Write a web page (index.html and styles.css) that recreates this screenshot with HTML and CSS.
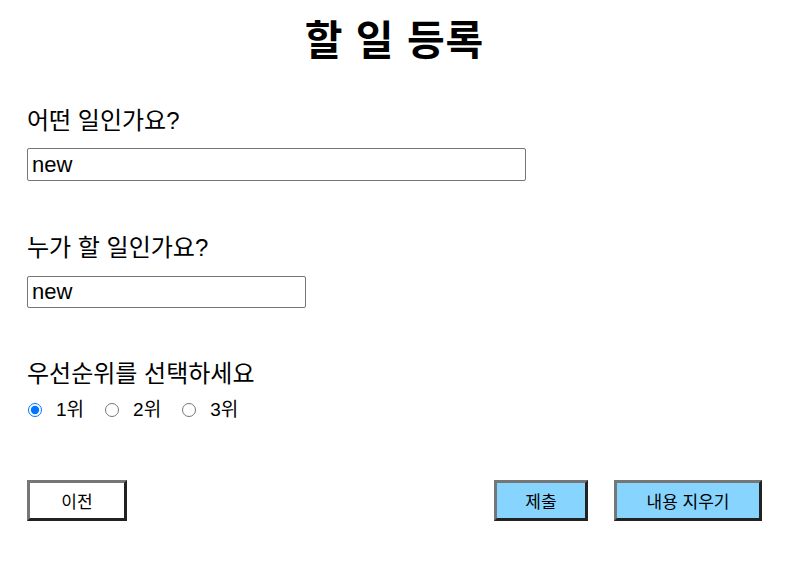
FILE: index.html
```html
<!DOCTYPE html>
<html lang="ko">
<head>
<meta charset="utf-8">
<link rel="stylesheet" href="styles.css">
</head>
<body>
<div class="page">
  <h1 class="title">할 일 등록</h1>
  <div class="field field-task">
    <label class="label">어떤 일인가요?</label>
    <input class="input input-wide" type="text" value="new">
  </div>
  <div class="field field-who">
    <label class="label">누가 할 일인가요?</label>
    <input class="input input-narrow" type="text" value="new">
  </div>
  <div class="field field-priority">
    <div class="label">우선순위를 선택하세요</div>
    <div class="radios">
      <label class="radio"><input type="radio" name="p" checked><span>1위</span></label>
      <label class="radio"><input type="radio" name="p"><span>2위</span></label>
      <label class="radio"><input type="radio" name="p"><span>3위</span></label>
    </div>
  </div>
  <div class="actions">
    <button class="btn btn-prev">이전</button>
    <div class="right">
      <button class="btn btn-blue btn-submit">제출</button>
      <button class="btn btn-blue btn-clear">내용 지우기</button>
    </div>
  </div>
</div>
</body>
</html>
```
FILE: styles.css
```css
* { box-sizing: border-box; }
body {
  margin: 0;
  background: #fff;
  color: #000;
  font-family: "Liberation Sans", "Noto Sans CJK KR", sans-serif;
}
.page {
  width: 735px;
  margin-left: 27px;
  padding-top: 14px;
  display: flex;
  flex-direction: column;
}
.title {
  margin: 0;
  text-align: center;
  font-size: 41px;
  line-height: 54px;
  font-weight: bold;
  letter-spacing: 1px;
}
.field {
  display: flex;
  flex-direction: column;
  align-items: flex-start;
}
.field-task { margin-top: 38px; }
.field-who { margin-top: 52px; }
.field-priority { margin-top: 51px; }
.label {
  font-size: 24px;
  line-height: 30px;
}
.input {
  margin-top: 12px;
  height: 33px;
  border: 1px solid #767676;
  border-radius: 2px;
  padding: 0 4px;
  font-family: "Liberation Sans", "Noto Sans CJK KR", sans-serif;
  font-size: 22px;
  color: #000;
  outline: none;
}
.input-wide { width: 499px; }
.input-narrow { width: 279px; height: 32px; margin-top: 13px; }
.radios {
  display: flex;
  align-items: center;
  margin-top: 9px;
  font-size: 19px;
  line-height: 24px;
}
.radio {
  display: flex;
  align-items: center;
  margin-right: 20px;
}
.radio input {
  margin: 0 14px 0 1px;
  width: 14px;
  height: 14px;
  accent-color: #0075ff;
}
.actions {
  margin-top: 58px;
  display: flex;
  justify-content: space-between;
}
.right {
  display: flex;
  gap: 26px;
}
.btn {
  height: 41px;
  border-width: 3px;
  border-style: solid;
  border-color: #767676 #222 #222 #767676;
  font-family: "Liberation Sans", "Noto Sans CJK KR", sans-serif;
  font-size: 17px;
  color: #000;
  padding: 0;
  background: #fff;
}
.btn-prev { width: 100px; }
.btn-blue { background: #87d5ff; }
.btn-submit { width: 94px; }
.btn-clear { width: 148px; }
```
